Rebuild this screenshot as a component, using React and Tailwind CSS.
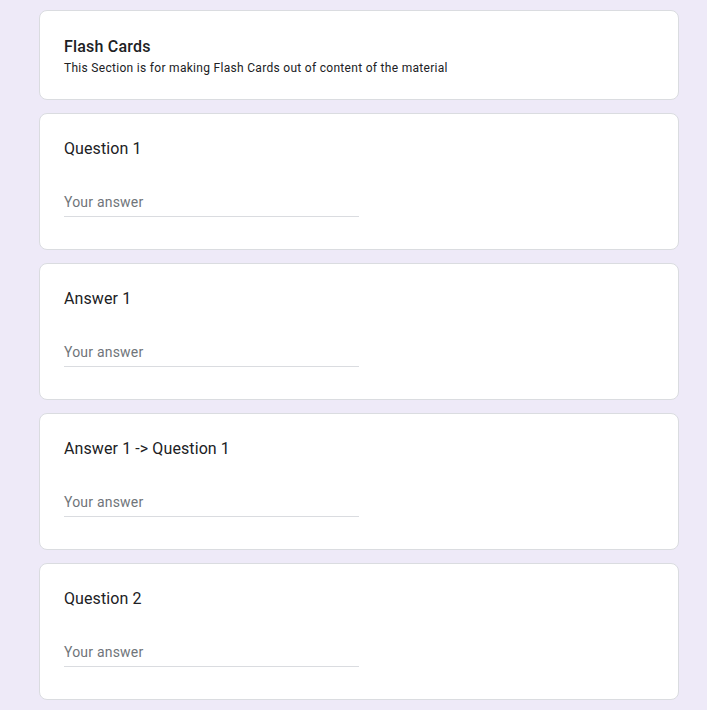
import React from "react";

function QuestionCard({ title }) {
  return (
    <div className="bg-white border border-[#dadce0] rounded-lg pt-[23px] pb-[32px] px-[24px]">
      <div className="text-[16px] leading-[24px] text-[#202124] tracking-[0.1px]">{title}</div>
      <div className="mt-[31px] w-[295px] border-b border-[#dadce0] pb-[4px]">
        <div className="text-[14px] leading-[20px] text-[#70757a] tracking-[0.2px]">Your answer</div>
      </div>
    </div>
  );
}

export default function App() {
  return (
    <div
      className="min-h-[710px] bg-[#eeeaf8] pt-[10px] pb-[12px]"
      style={{ fontFamily: "Roboto, 'Liberation Sans', sans-serif" }}
    >
      <div className="ml-[39px] w-[640px] flex flex-col gap-[13px]">
        <div className="bg-white border border-[#dadce0] rounded-lg pt-[24px] pb-[22px] px-[24px]">
          <div className="text-[16px] leading-[24px] font-medium text-[#202124] tracking-[0.2px]">Flash Cards</div>
          <div className="text-[12px] leading-[18px] text-[#202124] tracking-[0.3px]">
            This Section is for making Flash Cards out of content of the material
          </div>
        </div>
        <QuestionCard title="Question 1" />
        <QuestionCard title="Answer 1" />
        <QuestionCard title="Answer 1 -> Question 1" />
        <QuestionCard title="Question 2" />
      </div>
    </div>
  );
}
